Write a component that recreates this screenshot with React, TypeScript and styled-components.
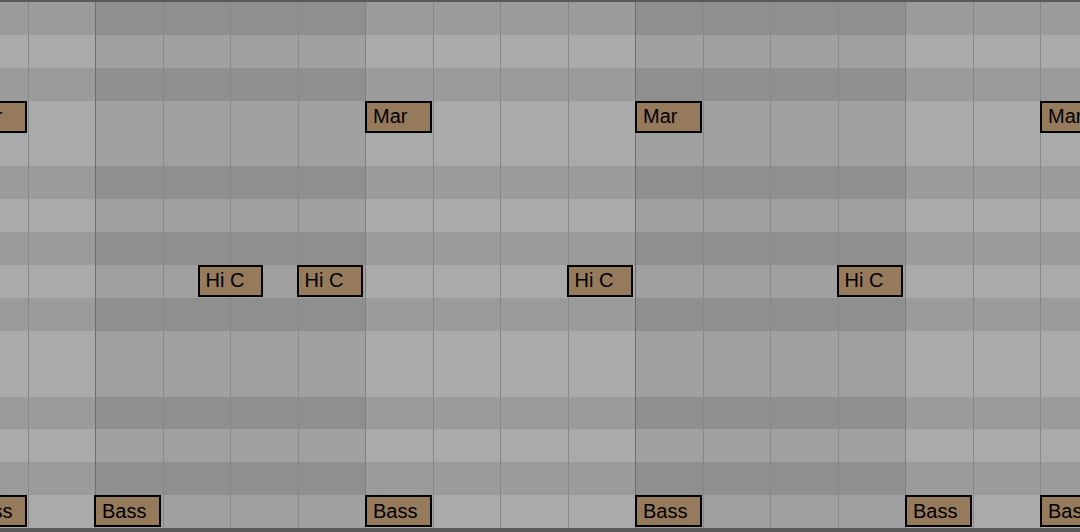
import React from 'react';
import styled, { createGlobalStyle } from 'styled-components';

const GlobalStyle = createGlobalStyle`
  html, body {
    margin: 0;
    padding: 0;
    background: #5a5a5a;
    overflow: hidden;
  }
`;

const Frame = styled.div`
  display: flex;
  flex-direction: column;
  width: 1080px;
  height: 532px;
  overflow: hidden;
  background: #5a5a5a;
`;

const Edge = styled.div<{ $h: number }>`
  flex: 0 0 ${(p) => p.$h}px;
  background: #595959;
`;

const Roll = styled.div`
  flex: 0 0 526px;
  overflow: hidden;
`;

const Lanes = styled.div`
  display: grid;
  grid-template-columns: repeat(18, 67.5px);
  grid-template-rows: repeat(16, 1fr);
  width: 1215px;
  height: 100%;
  margin-left: -40px;
`;

const shades = {
  light: { white: '#aaaaaa', black: '#9b9b9b' },
  dark: { white: '#a0a0a0', black: '#8f8f8f' },
};

const lineColors = {
  strong: '#6e6e6e',
  medium: '#808080',
  beat: '#888888',
};

type Line = 'strong' | 'medium' | 'beat';

const Cell = styled.div<{ $row: number; $col: number; $black: boolean; $darkBar: boolean; $line: Line }>`
  grid-row: ${(p) => p.$row + 1};
  grid-column: ${(p) => p.$col + 1};
  box-sizing: border-box;
  border-left: 1px solid ${(p) => lineColors[p.$line]};
  background: ${(p) => {
    const s = p.$darkBar ? shades.dark : shades.light;
    return p.$black ? s.black : s.white;
  }};
`;

const Note = styled.div<{ $row: number; $col: number; $shift: number; $trim: number }>`
  grid-row: ${(p) => p.$row + 1};
  grid-column: ${(p) => p.$col + 1};
  align-self: start;
  box-sizing: border-box;
  display: flex;
  align-items: center;
  width: calc(100% - ${(p) => 1 + p.$trim}px);
  height: calc(100% - 1px);
  margin-left: ${(p) => p.$shift}px;
  padding-left: 6px;
  border: 2px solid #000;
  background: #957a5c;
  color: #000;
  font-family: 'Liberation Sans', Arial, sans-serif;
  font-size: 20px;
  white-space: nowrap;
  overflow: hidden;
  position: relative;
  z-index: 1;
`;

const blackRows = [0, 2, 5, 7, 9, 12, 14];

type NoteData = { name: string; row: number; col: number; shift?: number; trim?: number };

const notes: NoteData[] = [
  { name: 'Mar', row: 3, col: 0 },
  { name: 'Mar', row: 3, col: 6 },
  { name: 'Mar', row: 3, col: 10 },
  { name: 'Mar', row: 3, col: 16 },
  { name: 'Hi C', row: 8, col: 3, shift: 35, trim: 1 },
  { name: 'Hi C', row: 8, col: 5, shift: -1 },
  { name: 'Hi C', row: 8, col: 9, shift: -1 },
  { name: 'Hi C', row: 8, col: 13, shift: -1 },
  { name: 'Bass', row: 15, col: 0 },
  { name: 'Bass', row: 15, col: 2, shift: -1 },
  { name: 'Bass', row: 15, col: 6 },
  { name: 'Bass', row: 15, col: 10 },
  { name: 'Bass', row: 15, col: 14 },
  { name: 'Bass', row: 15, col: 16 },
];

const App = () => {
  const cells: React.ReactNode[] = [];
  for (let r = 0; r < 16; r++) {
    for (let c = 0; c < 18; c++) {
      const line: Line = c % 8 === 2 ? 'strong' : c % 4 === 2 ? 'medium' : 'beat';
      cells.push(
        <Cell
          key={`${r}-${c}`}
          $row={r}
          $col={c}
          $black={blackRows.includes(r)}
          $darkBar={Math.floor((c + 2) / 4) % 2 === 1}
          $line={line}
        />,
      );
    }
  }
  return (
    <>
      <GlobalStyle />
      <Frame>
        <Edge $h={2} />
        <Roll>
          <Lanes>
            {cells}
            {notes.map((n, i) => (
              <Note key={i} $row={n.row} $col={n.col} $shift={n.shift ?? 0} $trim={n.trim ?? 0}>
                {n.name}
              </Note>
            ))}
          </Lanes>
        </Roll>
        <Edge $h={4} />
      </Frame>
    </>
  );
};

export default App;
